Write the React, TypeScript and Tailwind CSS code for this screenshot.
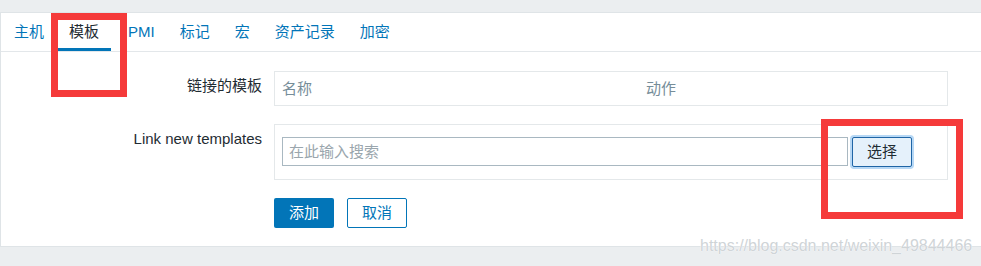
import React from "react";

const FONT = { fontFamily: '"Liberation Sans", Arial, "Noto Sans CJK SC", sans-serif' };

export default function App() {
  const tabs = ["主机", "模板", "PMI", "标记", "宏", "资产记录", "加密"];
  return (
    <div className="relative w-full h-[266px] bg-[#ebeef0] pt-[12px] overflow-hidden text-[15px] text-[#1f2c33]" style={FONT}>
      <div className="bg-white border-t border-l border-b border-[#dfe4e7] h-[235px]">
        {/* tabs */}
        <div className="flex h-[39px] border-b border-[#e3e7ea] pl-[1px] gap-[1px]">
          {tabs.map((t, i) => (
            <div
              key={t}
              className={
                "relative h-full px-[12px] flex items-center leading-[18px] pb-[1px] " +
                (i === 1 ? "text-[#1f2c33]" : "text-[#0275b8]") +
                (i === 2 ? " ml-[4px]" : "")
              }
            >
              {t}
              {i === 1 && <div className="absolute left-0 right-0 bottom-0 h-[3px] bg-[#0275b8]" />}
            </div>
          ))}
        </div>

        {/* form */}
        <div className="flex flex-col gap-[18px] pt-[19px]">
          <div className="flex gap-[12px]">
            <div className="w-[261px] text-right pt-[6px] leading-[18px]">链接的模板</div>
            <div className="w-[674px] h-[35px] border border-[#e4e8ea] grid grid-cols-[364px_1fr] items-center text-[#768d99] leading-[18px]">
              <div className="pl-[7px]">名称</div>
              <div className="pl-[7px]">动作</div>
            </div>
          </div>

          <div className="flex gap-[12px]">
            <div className="w-[261px] text-right pt-[6px] leading-[18px]">Link new templates</div>
            <div className="w-[674px] h-[56px] border border-[#e4e8ea] pl-[7px] pt-[12px] flex items-start gap-[4px]">
              <div className="w-[566px] h-[29px] border border-[#a9b8c1] flex items-center pl-[6px] text-[#9aa6ad] leading-[18px]">
                在此输入搜索
              </div>
              <div className="w-[60px] h-[30px] border border-[#1f65a6] rounded-[2px] bg-[#e5f1fb] ring-2 ring-[#b7d8f5] flex items-center justify-center leading-[18px] text-[#1f2c33]">
                选择
              </div>
            </div>
          </div>

          <div className="flex gap-[12px]">
            <div className="w-[261px]" />
            <div className="flex gap-[13px]">
              <div className="w-[60px] h-[30px] rounded-[2px] bg-[#0275b8] text-white flex items-center justify-center leading-[18px]">
                添加
              </div>
              <div className="w-[60px] h-[30px] rounded-[2px] border border-[#0275b8] bg-white text-[#0275b8] flex items-center justify-center leading-[18px]">
                取消
              </div>
            </div>
          </div>
        </div>
      </div>

      {/* watermark */}
      <div
        className="absolute left-[700px] top-[237px] text-[16px] leading-[18px] text-[#cfd4d7] whitespace-nowrap"
        style={{ textShadow: "0 0 1px #fff, 0 0 1px #fff" }}
      >
        https://blog.csdn.net/weixin_49844466
      </div>

      {/* red annotation boxes */}
      <div className="absolute left-[51px] top-[13px] w-[76px] h-[84px] border-[7px] border-[#f53a3a]" />
      <div className="absolute left-[821px] top-[119px] w-[142px] h-[100px] border-[7px] border-[#f53a3a]" />
    </div>
  );
}
